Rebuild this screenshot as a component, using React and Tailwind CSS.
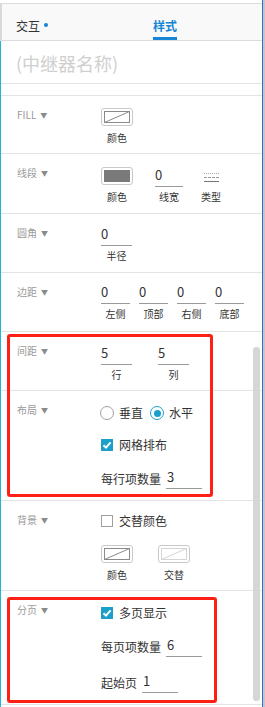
import React from "react";

const TEAL = "bg-[#1b9fc9]";

function Label({ children }) {
  return (
    <div className="w-[100px] shrink-0 self-start pl-[16px] pt-[12px] flex items-center text-[10px] leading-[14px] text-[#9a9a9a]">
      <span>{children}</span>
      <span className="ml-[4px] text-[7px] text-[#8a8a8a]">▼</span>
    </div>
  );
}

function Section({ h, label, children }) {
  return (
    <div className={`flex border-b border-[#e3e3e3] ${h}`}>
      <Label>{label}</Label>
      <div className="flex-1">{children}</div>
    </div>
  );
}

function Swatch({ kind, label }) {
  return (
    <div className="flex flex-col items-center w-[32px]">
      <div className="w-[32px] h-[18px] rounded-[3px] border border-[#c9c9c9] bg-white p-[2px]">
        {kind === "fill" ? (
          <div className="w-full h-full bg-[#7a7a7a]" />
        ) : (
          <svg width="26" height="12" viewBox="0 0 26 12" className="block">
            <rect
              x="0.5"
              y="0.5"
              width="25"
              height="11"
              fill="white"
              stroke={kind === "light" ? "#d4d4d4" : "#8a8a8a"}
            />
            <line x1="0.5" y1="11.5" x2="25.5" y2="0.5" stroke={kind === "light" ? "#d4d4d4" : "#8a8a8a"} />
          </svg>
        )}
      </div>
      <div className="mt-[5px] text-[10px] leading-[14px] text-[#333] whitespace-nowrap">{label}</div>
    </div>
  );
}

function Field({ value, label, w }) {
  return (
    <div className={`flex flex-col ${w}`}>
      <div className="h-[20px] border-b border-[#9a9a9a] text-[13px] leading-[16px] text-[#333]">{value}</div>
      <div className="mt-[3px] text-center text-[10px] leading-[14px] text-[#333] whitespace-nowrap">{label}</div>
    </div>
  );
}

function Radio({ checked, label }) {
  return (
    <div className="flex items-center">
      <div
        className={`w-[14px] h-[14px] rounded-full border bg-white flex items-center justify-center ${
          checked ? "border-[#1b9fc9]" : "border-[#a0a0a0]"
        }`}
      >
        {checked && <div className={`w-[7px] h-[7px] rounded-full ${TEAL}`} />}
      </div>
      <span className="ml-[5px] text-[12px] leading-[16px] text-[#333]">{label}</span>
    </div>
  );
}

function Check({ checked, label }) {
  return (
    <div className="flex items-center h-[16px]">
      {checked ? (
        <div className={`w-[12px] h-[12px] ${TEAL} flex items-center justify-center`}>
          <svg width="10" height="10" viewBox="0 0 10 10">
            <path d="M1.5 5.2 L4 7.6 L8.6 2.4" stroke="white" strokeWidth="2" fill="none" />
          </svg>
        </div>
      ) : (
        <div className="w-[12px] h-[12px] border border-[#a0a0a0] bg-white" />
      )}
      <span className="ml-[6px] text-[12px] leading-[16px] text-[#333]">{label}</span>
    </div>
  );
}

function Inline({ label, value }) {
  return (
    <div className="flex items-start">
      <span className="pt-[2px] text-[12px] leading-[16px] text-[#333]">{label}</span>
      <div className="ml-[5px] w-[36px] h-[20px] border-b border-[#9a9a9a] pl-[1px] text-[13px] leading-[16px] text-[#333]">
        {value}
      </div>
    </div>
  );
}

export default function App() {
  return (
    <div className="relative w-[265px] h-[707px] overflow-hidden bg-white flex font-['Noto_Sans_CJK_SC','Noto_Sans',sans-serif]">
      <div className="w-[262px] flex flex-col">
        <div className="h-[3px]" />
        {/* tabs */}
        <div className="h-[38px] flex border-t border-b border-[#dcdcdc] border-l-2 border-l-[#d9d9d9] bg-[#f9f9f9]">
          <div className="w-[151px] pl-[14px] pt-[14px] flex items-start">
            <span className="text-[12px] leading-[16px] text-[#333]">交互</span>
            <span className="ml-[4px] mt-[5px] w-[4px] h-[4px] rounded-full bg-[#1585d6]" />
          </div>
          <div className="pt-[14px] pb-[3px] border-b-[3px] border-[#1585d6] self-start">
            <span className="block text-[12px] leading-[16px] font-bold text-[#1585d6]">样式</span>
          </div>
        </div>
        {/* body */}
        <div className="flex-1 border-l border-[#21b5d8]">
          <div className="h-[43px] border-b border-[#e3e3e3] pl-[15px] pt-[12px]">
            <div className="text-[18px] leading-[20px] text-[#cfcfcf]">(中继器名称)</div>
          </div>
          <div className="h-[12px] border-b border-[#e3e3e3]" />

          <Section h="h-[58px]" label="FILL">
            <div className="pt-[12px] flex">
              <Swatch kind="empty" label="颜色" />
            </div>
          </Section>

          <Section h="h-[60px]" label="线段">
            <div className="pt-[13px] flex">
              <Swatch kind="fill" label="颜色" />
              <div className="ml-[22px]">
                <Field value="0" label="线宽" w="w-[28px]" />
              </div>
              <div className="ml-[14px] w-[28px] flex flex-col items-center">
                <div className="h-[20px] pt-[5px]">
                  <svg width="15" height="11" viewBox="0 0 15 11" className="block">
                    <line x1="0" y1="1.5" x2="15" y2="1.5" stroke="#a8a8a8" strokeDasharray="1 1" />
                    <line x1="0" y1="5.5" x2="15" y2="5.5" stroke="#999" strokeDasharray="3 1" />
                    <line x1="0" y1="9.5" x2="15" y2="9.5" stroke="#777" />
                  </svg>
                </div>
                <div className="mt-[3px] text-[10px] leading-[14px] text-[#333] whitespace-nowrap">类型</div>
              </div>
            </div>
          </Section>

          <Section h="h-[59px]" label="圆角">
            <div className="pt-[12px] flex">
              <Field value="0" label="半径" w="w-[31px]" />
            </div>
          </Section>

          <Section h="h-[59px]" label="边距">
            <div className="pt-[11px] flex gap-[9px]">
              <Field value="0" label="左侧" w="w-[29px]" />
              <Field value="0" label="顶部" w="w-[29px]" />
              <Field value="0" label="右侧" w="w-[29px]" />
              <Field value="0" label="底部" w="w-[29px]" />
            </div>
          </Section>

          <Section h="h-[59px]" label="间距">
            <div className="pt-[13px] flex gap-[26px]">
              <Field value="5" label="行" w="w-[31px]" />
              <Field value="5" label="列" w="w-[31px]" />
            </div>
          </Section>

          <Section h="h-[110px]" label="布局">
            <div className="pt-[14px] flex flex-col gap-[16px]">
              <div className="flex items-center h-[16px] gap-[7px] -ml-[1px]">
                <Radio label="垂直" />
                <Radio checked label="水平" />
              </div>
              <Check checked label="网格排布" />
              <Inline label="每行项数量" value="3" />
            </div>
          </Section>

          <Section h="h-[90px]" label="背景">
            <div className="pt-[12px] flex flex-col gap-[16px]">
              <Check label="交替颜色" />
              <div className="flex gap-[25px]">
                <Swatch kind="empty" label="颜色" />
                <Swatch kind="light" label="交替" />
              </div>
            </div>
          </Section>

          <Section h="h-[114px]" label="分页">
            <div className="pt-[14px] flex flex-col gap-[16px]">
              <Check checked label="多页显示" />
              <Inline label="每页项数量" value="6" />
              <Inline label="起始页" value="1" />
            </div>
          </Section>
        </div>
      </div>
      <div className="w-[1px] bg-[#2f72c6]" />
      <div className="w-[2px] bg-[#c6c6c6]" />

      {/* scrollbar */}
      <div className="absolute left-[253px] top-[347px] w-[7px] h-[354px] rounded-[3px] bg-[#d6d6d6]" />

      {/* annotation boxes */}
      <div className="absolute left-[7px] top-[334px] w-[206px] h-[163px] rounded-[3px] border-[3px] border-[#ff1f14]" />
      <div className="absolute left-[7px] top-[597px] w-[210px] h-[106px] rounded-[3px] border-[3px] border-[#ff1f14]" />
    </div>
  );
}
